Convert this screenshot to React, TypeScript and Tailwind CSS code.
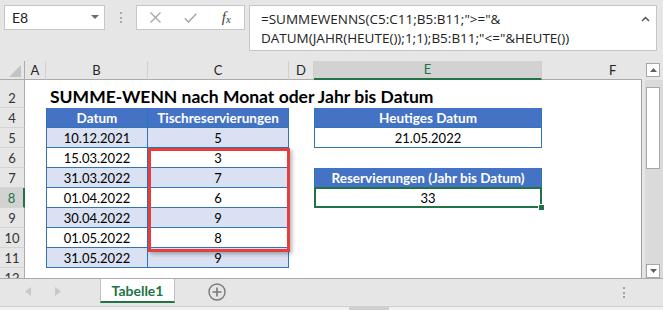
import React from "react";

type Kind = "hdr" | "band" | "white";
type CellDef = { t: string; k: Kind; l?: boolean; sel?: boolean };
type RowDef = { n: string; title?: string; B?: CellDef; C?: CellDef; E?: CellDef };

const rows: RowDef[] = [
  { n: "2", title: "SUMME-WENN nach Monat oder Jahr bis Datum" },
  {
    n: "4",
    B: { t: "Datum", k: "hdr", l: true },
    C: { t: "Tischreservierungen", k: "hdr" },
    E: { t: "Heutiges Datum", k: "hdr", l: true },
  },
  {
    n: "5",
    B: { t: "10.12.2021", k: "band", l: true },
    C: { t: "5", k: "band" },
    E: { t: "21.05.2022", k: "white", l: true },
  },
  { n: "6", B: { t: "15.03.2022", k: "white", l: true }, C: { t: "3", k: "white" } },
  {
    n: "7",
    B: { t: "31.03.2022", k: "band", l: true },
    C: { t: "7", k: "band" },
    E: { t: "Reservierungen (Jahr bis Datum)", k: "hdr", l: true },
  },
  {
    n: "8",
    B: { t: "01.04.2022", k: "white", l: true },
    C: { t: "6", k: "white" },
    E: { t: "33", k: "white", l: true, sel: true },
  },
  { n: "9", B: { t: "30.04.2022", k: "band", l: true }, C: { t: "9", k: "band" } },
  { n: "10", B: { t: "01.05.2022", k: "white", l: true }, C: { t: "8", k: "white" } },
  { n: "11", B: { t: "31.05.2022", k: "band", l: true }, C: { t: "9", k: "band" } },
  { n: "12" },
];

const kindClass: Record<Kind, string> = {
  hdr: "bg-[#4472c4] text-white font-bold text-[13.5px] border-[#2f75b5]",
  band: "bg-[#d9e1f2] text-black text-[13px] border-[#2f75b5]",
  white: "bg-white text-black text-[13px] border-[#2f75b5]",
};

function DataCell({ c }: { c?: CellDef }) {
  if (!c) return <div />;
  return (
    <div
      className={`relative flex items-end justify-center whitespace-nowrap border-b border-r pb-[2px] leading-none ${
        c.l ? "border-l" : ""
      } ${kindClass[c.k]}`}
    >
      {c.t}
      {c.sel ? (
        <>
          <span className="pointer-events-none absolute -inset-px border-2 border-[#217346]" />
          <span className="absolute -bottom-[4px] -right-[4px] h-[7px] w-[7px] border border-white bg-[#217346]" />
        </>
      ) : null}
    </div>
  );
}

function ColHead({ label, active, className = "" }: { label: string; active?: boolean; className?: string }) {
  return (
    <div
      className={`flex items-center border-r border-r-[#d0d0d0] text-[13px] leading-none ${
        active
          ? "border-b-2 border-b-[#217346] bg-[#d2d2d2] text-[#217346]"
          : "border-b border-b-[#ababab] bg-[#e6e6e6] text-[#262626]"
      } ${className || "justify-center"}`}
    >
      {label}
    </div>
  );
}

function RowHead({ n, active }: { n: string; active?: boolean }) {
  return (
    <div
      className={`flex items-end justify-center border-b border-b-[#d4d4d4] pb-[2px] text-[13px] leading-none ${
        active
          ? "border-r-2 border-r-[#217346] bg-[#d2d2d2] text-[#217346]"
          : "border-r border-r-[#ababab] bg-[#e6e6e6] text-[#333]"
      }`}
    >
      {n}
    </div>
  );
}

function Sheet() {
  return (
    <div className="relative grid h-[217px] w-[642px] grid-cols-[25px_21px_102px_141px_25px_228px_100px] grid-rows-[19px_28px_repeat(9,20px)] overflow-hidden bg-white">
      <div className="relative border-b border-r border-b-[#ababab] border-r-[#ababab] bg-[#e6e6e6]">
        <svg className="absolute right-[3px] bottom-[2px]" width="12" height="12" viewBox="0 0 12 12">
          <path d="M12 0V12H0z" fill="#c4c4c4" />
        </svg>
      </div>
      <ColHead label="A" />
      <ColHead label="B" />
      <ColHead label="C" />
      <ColHead label="D" />
      <ColHead label="E" active />
      <ColHead label="F" className="justify-start border-r-0 pl-[67px]" />

      {rows.map((r) =>
        r.title ? (
          <React.Fragment key={r.n}>
            <RowHead n={r.n} />
            <div />
            <div className="col-span-4 flex items-end whitespace-nowrap pb-[3px] pl-[4px] text-[17.5px] font-bold leading-none text-black">
              {r.title}
            </div>
            <div className="border-r border-r-[#9e9e9e]" />
          </React.Fragment>
        ) : (
          <React.Fragment key={r.n}>
            <RowHead n={r.n} active={r.n === "8"} />
            <div />
            <DataCell c={r.B} />
            <DataCell c={r.C} />
            <div />
            <DataCell c={r.E} />
            <div className="border-r border-r-[#9e9e9e]" />
          </React.Fragment>
        )
      )}

      <div className="pointer-events-none absolute left-[148px] top-[87px] h-[104px] w-[142px] border-[3px] border-[#e63e3e] shadow-[2px_2px_4px_rgba(0,0,0,0.3)]" />
    </div>
  );
}

function VScroll() {
  return (
    <div className="flex w-[21px] flex-col bg-[#e6e6e6]">
      <div className="h-[19px] pl-[4px] pt-[2px]">
        <div className="flex h-[14px] w-[14px] items-center justify-center border border-[#a6a6a6] bg-white">
          <svg width="7" height="4" viewBox="0 0 7 4">
            <path d="M0 4L3.5 0L7 4z" fill="#606060" />
          </svg>
        </div>
      </div>
      <div className="ml-[3px] flex flex-1 flex-col bg-[#dadada] pl-px pt-[7px]">
        <div className="h-[82px] w-[14px] border border-[#a6a6a6] bg-white" />
        <div className="mt-auto flex h-[14px] w-[14px] items-center justify-center border border-[#a6a6a6] bg-white">
          <svg width="7" height="4" viewBox="0 0 7 4">
            <path d="M0 0L3.5 4L7 0z" fill="#606060" />
          </svg>
        </div>
      </div>
    </div>
  );
}

function FormulaBar() {
  return (
    <div className="flex h-[61px] shrink-0 items-start pl-[4px] pt-[5px]">
      <div className="relative flex h-[25px] w-[101px] items-center border border-[#c6c6c6] bg-white pl-[7px] text-[14px] text-[#222]">
        E8
        <svg className="absolute right-[5px] top-[9px]" width="8" height="5" viewBox="0 0 8 5">
          <path d="M0 0H8L4 4z" fill="#6b6b6b" />
        </svg>
      </div>
      <div className="flex h-[25px] w-[31px] flex-col items-center justify-center gap-[2.5px]">
        <span className="h-[2px] w-[2px] bg-[#ababab]" />
        <span className="h-[2px] w-[2px] bg-[#ababab]" />
        <span className="h-[2px] w-[2px] bg-[#ababab]" />
      </div>
      <div className="flex h-[25px] w-[109px] items-center border border-[#c6c6c6] bg-white pl-px">
        <div className="flex w-[36px] justify-center">
          <svg width="11" height="11" viewBox="0 0 11 11">
            <path d="M0.5 0.5L10.5 10.5M10.5 0.5L0.5 10.5" stroke="#a6a6a6" strokeWidth="1.3" />
          </svg>
        </div>
        <div className="flex w-[36px] justify-center">
          <svg width="13" height="10" viewBox="0 0 13 10">
            <path d="M0.8 5.2L4.5 9L12.3 0.8" stroke="#a6a6a6" strokeWidth="1.5" fill="none" />
          </svg>
        </div>
        <div className="flex w-[36px] justify-center font-['Liberation_Serif',serif] text-[15px] italic leading-none text-[#404040]">
          <span>f</span>
          <span className="mt-[4px] text-[11px]">x</span>
        </div>
      </div>
      <div className="relative ml-[4px] h-[46px] w-[408px] whitespace-nowrap border border-[#c6c6c6] bg-white pl-[11px] pt-[4px] font-['Open_Sans',sans-serif] text-[13.5px] leading-[19px] text-[#222]">
        <div>{'=SUMMEWENNS(C5:C11;B5:B11;">="&'}</div>
        <div>{'DATUM(JAHR(HEUTE());1;1);B5:B11;"<="&HEUTE())'}</div>
        <svg className="absolute right-[6px] top-[10px]" width="9" height="6" viewBox="0 0 9 6">
          <path d="M1 5L4.5 1.5L8 5" stroke="#555" strokeWidth="1.5" fill="none" />
        </svg>
      </div>
    </div>
  );
}

function TabBar() {
  return (
    <div className="flex h-[28px] shrink-0 items-start border-t border-[#ababab] bg-[#e6e6e6]">
      <div className="flex h-[24px] w-[100px] items-center pl-[25px]">
        <svg width="6" height="9" viewBox="0 0 6 9">
          <path d="M6 0V9L0 4.5z" fill="#c8c8c8" />
        </svg>
        <svg className="ml-[24px]" width="6" height="9" viewBox="0 0 6 9">
          <path d="M0 0V9L6 4.5z" fill="#c8c8c8" />
        </svg>
      </div>
      <div className="flex h-[24px] w-[75px] items-center justify-center border-x border-b-2 border-x-[#c0c0c0] border-b-[#217346] bg-white pt-px text-[14px] font-bold leading-none text-[#217346]">
        Tabelle1
      </div>
      <svg className="ml-[33px] mt-[4px]" width="18" height="18" viewBox="0 0 18 18">
        <circle cx="9" cy="9" r="8" stroke="#7a7a7a" strokeWidth="1.4" fill="none" />
        <path d="M9 4.5V13.5M4.5 9H13.5" stroke="#7a7a7a" strokeWidth="1.6" />
      </svg>
      <div className="ml-auto mr-[38px] mt-[8px] flex flex-col gap-[2.5px]">
        <span className="h-[2px] w-[2px] bg-[#a0a0a0]" />
        <span className="h-[2px] w-[2px] bg-[#a0a0a0]" />
        <span className="h-[2px] w-[2px] bg-[#a0a0a0]" />
      </div>
    </div>
  );
}

export default function App() {
  return (
    <div className="flex h-[310px] w-[663px] flex-col overflow-hidden bg-[#e6e6e6] font-['Lato',sans-serif]">
      <FormulaBar />
      <div className="flex h-[217px] shrink-0">
        <Sheet />
        <VScroll />
      </div>
      <TabBar />
      <div className="h-[4px] shrink-0 border-t border-[#cfcfcf] bg-[#f1f1f1] pl-[349px]">
        <div className="h-full w-[40px] bg-[#cfcfcf]" />
      </div>
    </div>
  );
}
